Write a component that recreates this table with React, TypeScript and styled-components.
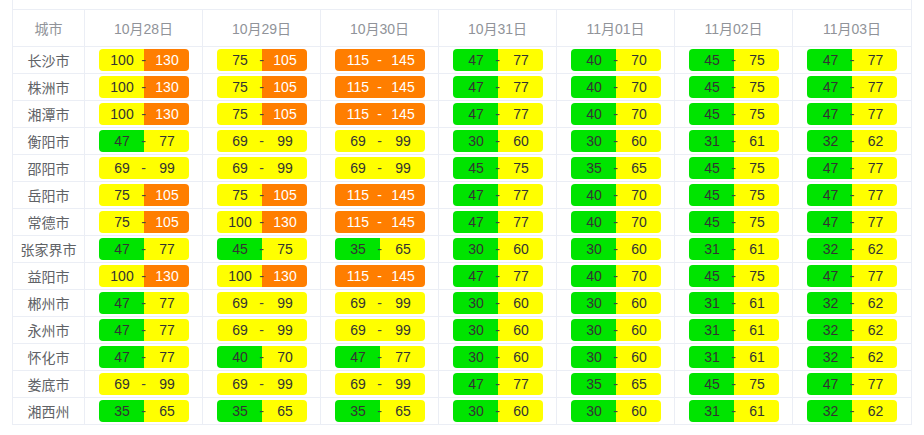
import React from "react"
import styled, { createGlobalStyle } from "styled-components"

const GlobalStyle = createGlobalStyle`
    html, body {
        margin: 0;
        padding: 0;
        background: #fff;
    }
    body {
        font-family: "Liberation Sans", "Noto Sans CJK SC", Arial, sans-serif;
    }
`

const Wrapper = styled.div`
    margin-left: 12px;
    width: 900px;
    box-sizing: border-box;
    padding-top: 9px;
    border-left: 1px solid #ebeef5;
    border-right: 1px solid #ebeef5;
`

const Table = styled.table`
    width: 898px;
    table-layout: fixed;
    border-collapse: separate;
    border-spacing: 0;
    border-top: 1px solid #ebeef5;
    font-size: 14px;
`

const HeadCell = styled.th`
    height: 37px;
    padding: 0;
    box-sizing: border-box;
    font-weight: normal;
    color: #909399;
    text-align: center;
    border-bottom: 1px solid #ebeef5;
    border-right: 1px solid #ebeef5;
    &:last-child {
        border-right: none;
    }
`

const Cell = styled.td`
    height: 27px;
    padding: 0;
    box-sizing: border-box;
    color: #606266;
    text-align: center;
    vertical-align: middle;
    border-bottom: 1px solid #ebeef5;
    border-right: 1px solid #ebeef5;
    &:last-child {
        border-right: none;
    }
`

const Pill = styled.div`
    display: inline-flex;
    width: 90px;
    height: 22px;
    border-radius: 4px;
    overflow: hidden;
    vertical-align: middle;
`

const Half = styled.span<{ $bg: string; $fg: string }>`
    flex: 0 0 45px;
    display: flex;
    align-items: center;
    justify-content: center;
    padding-left: 2px;
    box-sizing: border-box;
    background: ${(p) => p.$bg};
    color: ${(p) => p.$fg};
    line-height: 22px;
`

const Dash = styled.span<{ $fg: string }>`
    position: relative;
    z-index: 1;
    flex: 0 0 8px;
    margin: 0 -4px;
    text-align: center;
    color: ${(p) => p.$fg};
    line-height: 22px;
    font-size: 14px;
`

const level = (v: number) => {
    if (v <= 50) return { bg: "#00e400", fg: "#333" }
    if (v <= 100) return { bg: "#ffff00", fg: "#333" }
    return { bg: "#ff7e00", fg: "#fff" }
}

const Range = ({ lo, hi }: { lo: number; hi: number }) => {
    const a = level(lo)
    const b = level(hi)
    return (
        <Pill>
            <Half $bg={a.bg} $fg={a.fg}>{lo}</Half>
            <Dash $fg={a.fg === "#fff" ? "#fff" : "#444"}>-</Dash>
            <Half $bg={b.bg} $fg={b.fg}>{hi}</Half>
        </Pill>
    )
}

const dates = ["10月28日", "10月29日", "10月30日", "10月31日", "11月01日", "11月02日", "11月03日"]

const hot = "100-130 75-105 115-145 47-77 40-70 45-75 47-77"
const low = "47-77 69-99 69-99 30-60 30-60 31-61 32-62"

const rows: [string, string][] = [
    ["长沙市", hot],
    ["株洲市", hot],
    ["湘潭市", hot],
    ["衡阳市", low],
    ["邵阳市", "69-99 69-99 69-99 45-75 35-65 45-75 47-77"],
    ["岳阳市", "75-105 75-105 115-145 47-77 40-70 45-75 47-77"],
    ["常德市", "75-105 100-130 115-145 47-77 40-70 45-75 47-77"],
    ["张家界市", "47-77 45-75 35-65 30-60 30-60 31-61 32-62"],
    ["益阳市", "100-130 100-130 115-145 47-77 40-70 45-75 47-77"],
    ["郴州市", low],
    ["永州市", low],
    ["怀化市", "47-77 40-70 47-77 30-60 30-60 31-61 32-62"],
    ["娄底市", "69-99 69-99 69-99 47-77 35-65 45-75 47-77"],
    ["湘西州", "35-65 35-65 35-65 30-60 30-60 31-61 32-62"],
]

export default function App() {
    return (
        <>
            <GlobalStyle />
            <Wrapper>
                <Table>
                    <colgroup>
                        <col style={{ width: 72 }} />
                        {dates.map((d) => (
                            <col key={d} style={{ width: 118 }} />
                        ))}
                    </colgroup>
                    <thead>
                        <tr>
                            <HeadCell>城市</HeadCell>
                            {dates.map((d) => (
                                <HeadCell key={d}>{d}</HeadCell>
                            ))}
                        </tr>
                    </thead>
                    <tbody>
                        {rows.map(([city, vals]) => (
                            <tr key={city}>
                                <Cell>{city}</Cell>
                                {vals.split(" ").map((r, i) => {
                                    const [lo, hi] = r.split("-").map(Number)
                                    return (
                                        <Cell key={i}>
                                            <Range lo={lo} hi={hi} />
                                        </Cell>
                                    )
                                })}
                            </tr>
                        ))}
                    </tbody>
                </Table>
            </Wrapper>
        </>
    )
}
